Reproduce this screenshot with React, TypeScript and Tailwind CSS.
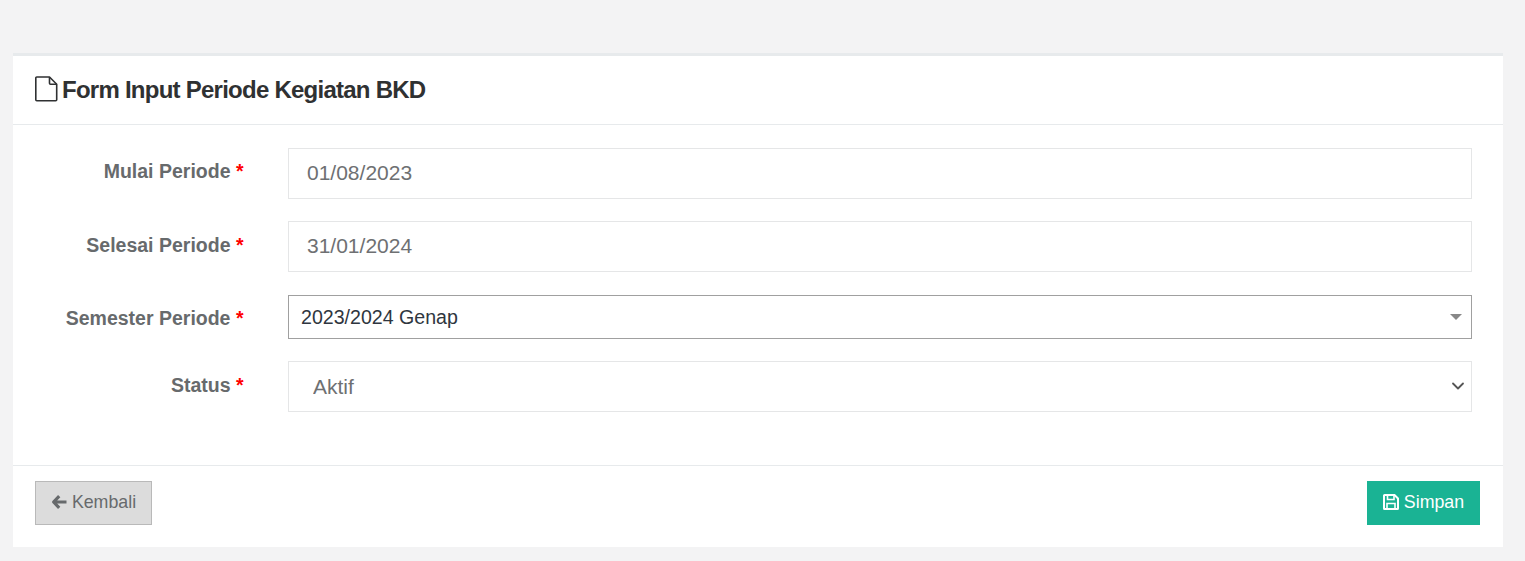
import { ChevronDown } from "lucide-react";

function FormRow({ label, labelOffset, children }: { label: string; labelOffset: string; children: React.ReactNode }) {
  return (
    <div className="flex items-start">
      <label className={`w-[230.5px] shrink-0 text-right text-[19.5px] leading-[24px] font-bold text-[#676a6c] ${labelOffset}`}>
        {label} <span className="text-[#ff0000]">*</span>
      </label>
      <div className="ml-[44.5px] flex-1">{children}</div>
    </div>
  );
}

const inputClass =
  "block h-[51px] w-full border border-[#e5e6e7] bg-white px-[18px] pb-[2px] text-[21px] text-[#6e7072] outline-none";

export default function App() {
  return (
    <div className="h-[561px] overflow-hidden bg-[#f3f3f4] px-[13px] pr-[22px] pt-[53px] font-['Liberation_Sans',Arial,sans-serif]">
      <div className="border-t-[3px] border-[#e7eaec] bg-white">
        <div className="flex h-[69px] items-center border-b border-[#e7eaec] px-[22px] pb-[2px]">
          <svg width="23" height="26" viewBox="0 0 23 26" fill="none" stroke="#2f3132" strokeWidth="1.6" className="mr-[4px] shrink-0">
            <path d="M1.8 1h12.7l7.2 7.2v15.6a1 1 0 0 1-1 1H1.8a1 1 0 0 1-1-1V2a1 1 0 0 1 1-1z" strokeLinejoin="round" />
            <path d="M14.5 1v6.2a1 1 0 0 0 1 1h6.2" strokeLinejoin="round" />
          </svg>
          <h5 className="mt-[2px] text-[24px] leading-[30px] font-bold tracking-[-0.75px] text-[#2f3132]">Form Input Periode Kegiatan BKD</h5>
        </div>

        <div className="pr-[31px] pt-[23px] pb-[53px]">
          <FormRow label="Mulai Periode" labelOffset="mt-[11px]">
            <input readOnly value="01/08/2023" className={inputClass} />
          </FormRow>
          <div className="mt-[22px]">
            <FormRow label="Selesai Periode" labelOffset="mt-[12px]">
              <input readOnly value="31/01/2024" className={inputClass} />
            </FormRow>
          </div>
          <div className="mt-[23px]">
            <FormRow label="Semester Periode" labelOffset="mt-[11px]">
              <div className="flex h-[44px] items-center justify-between border border-[#a0a0a0] bg-white pl-[12px] pr-[9px]">
                <span className="mt-[1px] text-[19.6px] text-[#2f3640]">2023/2024 Genap</span>
                <span className="mb-[1px] border-x-[6px] border-t-[6px] border-x-transparent border-t-[#888888]" />
              </div>
            </FormRow>
          </div>
          <div className="mt-[22px]">
            <FormRow label="Status" labelOffset="mt-[12px]">
              <div className="relative">
                <select defaultValue="Aktif" className={`${inputClass} appearance-none !pb-0 pl-[24px] pr-[30px]`}>
                  <option>Aktif</option>
                  <option>Tidak Aktif</option>
                </select>
                <ChevronDown className="absolute right-[4px] top-[15px] h-[20px] w-[20px] text-[#555555]" strokeWidth={2.2} />
              </div>
            </FormRow>
          </div>
        </div>

        <div className="flex h-[82px] items-start justify-between border-t border-[#e7eaec] px-[22px] pr-[23px] pt-[15px]">
          <button className="flex h-[44px] w-[117px] items-center justify-center gap-[5px] border border-[#b9b9b9] bg-[#dcdcdc] pb-[2px] text-[17.8px] text-[#676a6c]">
            <svg width="16" height="16" viewBox="0 0 16 16" fill="none" stroke="currentColor" strokeWidth="3.2" strokeLinejoin="round">
              <path d="M8.2 2.2 2.6 8l5.6 5.8M3 8h12.5" />
            </svg>
            Kembali
          </button>
          <button className="flex h-[44px] w-[113px] items-center justify-center gap-[5px] bg-[#1ab394] pb-[2px] text-[17.8px] text-white">
            <svg width="16" height="16" viewBox="0 0 16 16" fill="none" stroke="currentColor" strokeWidth="2">
              <path d="M1 1.5a.5.5 0 0 1 .5-.5h10L15 4.5V14.5a.5.5 0 0 1-.5.5h-13a.5.5 0 0 1-.5-.5z" />
              <path d="M4.5 1.5V5.5h6.5V1.5M4 15V9.5h8V15" strokeWidth="1.6" />
            </svg>
            Simpan
          </button>
        </div>
      </div>
    </div>
  );
}
